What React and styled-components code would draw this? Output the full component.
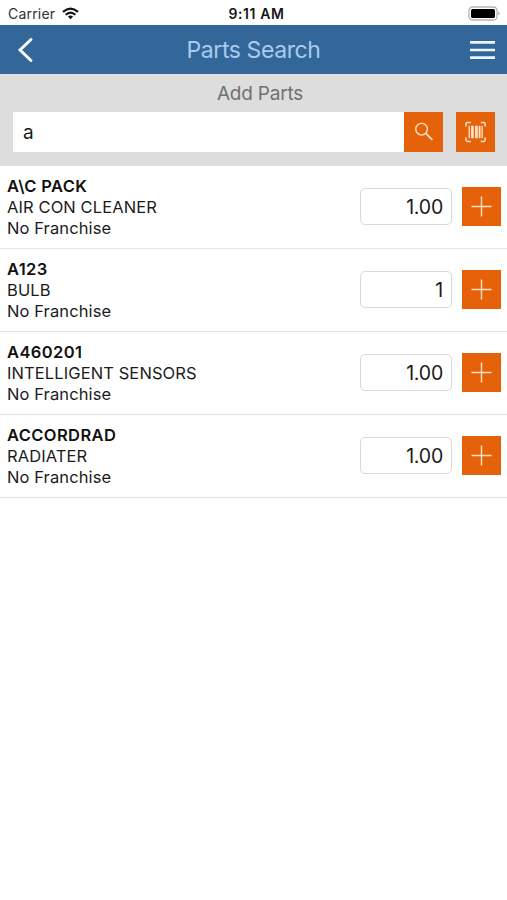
import React from "react";
import styled, { createGlobalStyle } from "styled-components";

const GlobalStyle = createGlobalStyle`
  * { box-sizing: border-box; }
  body { margin: 0; background: #fff; }
  button, input { font: inherit; border: 0; padding: 0; margin: 0; border-radius: 0; outline: none; }
`;

const Screen = styled.div`
  width: 507px;
  height: 900px;
  background: #fff;
  color: #1b1b1b;
  font-family: Inter, "Liberation Sans", sans-serif;
  overflow: hidden;
`;

const StatusBar = styled.div`
  display: grid;
  grid-template-columns: 1fr auto 1fr;
  align-items: center;
  height: 25px;
  padding: 2px 7px 0 8px;
  font-size: 14px;
  line-height: 22px;
`;

const Carrier = styled.span`
  display: flex;
  align-items: center;
  gap: 7px;
  color: #303030;
  letter-spacing: 0.2px;
`;

const Clock = styled.span`
  padding-left: 5px;
  font-size: 14px;
  font-weight: 600;
  letter-spacing: 0.6px;
  color: #161616;
`;

const BatterySlot = styled.span`
  display: flex;
  justify-content: flex-end;
`;

const NavBar = styled.header`
  display: grid;
  grid-template-columns: 1fr auto 1fr;
  align-items: center;
  height: 49px;
  padding: 0 12px 0 17px;
  background: #336699;
`;

const NavButton = styled.button`
  display: flex;
  justify-self: ${(p) => p.$side};
  background: none;
  color: #fff;
`;

const Title = styled.h1`
  margin: 0 5px 0 0;
  font-size: 23px;
  font-weight: 400;
  line-height: 30px;
  letter-spacing: -0.4px;
  color: #a9cbee;
`;

const SearchPanel = styled.section`
  height: 92px;
  padding: 6px 12px 0 13px;
  background: #dddddd;
`;

const PanelTitle = styled.h2`
  margin: 0 0 4px;
  padding-left: 12px;
  font-size: 19px;
  font-weight: 400;
  line-height: 28px;
  letter-spacing: -0.2px;
  text-align: center;
  color: #707070;
`;

const SearchRow = styled.div`
  display: flex;
`;

const SearchInput = styled.input`
  flex: 1;
  min-width: 0;
  height: 40px;
  && { padding: 0 10px; }
  font-size: 19px;
  color: #1b1b1b;
  background: #fff;
`;

const ActionButton = styled.button`
  display: flex;
  flex: none;
  align-items: center;
  justify-content: center;
  width: 39px;
  height: ${(p) => p.$height || 39}px;
  && { margin-left: ${(p) => p.$gap || 0}px; }
  color: #ffe3c4;
  background: #e6620a;
`;

const PartRow = styled.li`
  display: flex;
  align-items: flex-start;
  height: 83px;
  padding: 10px 6px 0 7px;
  border-bottom: 1px solid #e2e2e2;
`;

const PartList = styled.ul`
  margin: 0;
  padding: 0;
  list-style: none;
`;

const PartInfo = styled.div`
  flex: 1;
  font-size: 16.5px;
  line-height: 21px;
`;

const PartCode = styled.div`
  font-weight: 600;
  color: #111;
  letter-spacing: 0.4px;
`;

const PartLine = styled.div`
  letter-spacing: 0.1px;
`;

const Controls = styled.div`
  display: flex;
  align-items: center;
  height: 61px;
`;

const Quantity = styled.input`
  width: 92px;
  height: 37px;
  && {
    padding: 0 8px;
    border: 1px solid #d9d9d9;
    border-radius: 5px;
  }
  font-size: 19.5px;
  letter-spacing: -0.2px;
  text-align: right;
  color: #1b1b1b;
  background: #fff;
`;

const WifiIcon = () => (
  <svg width="17" height="13" viewBox="0 0 17 13" fill="none" stroke="#111" strokeWidth="2.1">
    <path d="M1 4.9Q8.5-1.7 16 4.9" />
    <path d="M3.6 7.8Q8.5 3.4 13.4 7.8" />
    <path d="M5.9 9.5Q8.5 7.3 11.1 9.5L8.5 12.2Z" fill="#111" stroke="none" />
  </svg>
);

const BatteryIcon = () => (
  <svg width="32" height="15" viewBox="0 0 32 15">
    <rect x="1" y="1" width="28" height="13" rx="3.6" fill="#fff" stroke="#b5b5b5" strokeWidth="1.3" />
    <rect x="3" y="3" width="24" height="9" rx="1.6" fill="#000" />
    <path d="M30.5 5.5Q32.5 7.5 30.5 9.5Z" fill="#888" />
  </svg>
);

const BackIcon = () => (
  <svg width="17" height="26" viewBox="0 0 17 26" fill="none" stroke="currentColor" strokeWidth="2.9">
    <path d="M14 2.5L3 13L14 23.5" strokeLinecap="round" />
  </svg>
);

const MenuIcon = () => (
  <svg width="25" height="20" viewBox="0 0 25 20" stroke="#edf6ff" strokeWidth="2.6">
    <path d="M0 2.4H25M0 10H25M0 17.6H25" />
  </svg>
);

const SearchIcon = () => (
  <svg width="20" height="20" viewBox="0 0 20 20" fill="none" stroke="currentColor" strokeWidth="1.4">
    <circle cx="7.6" cy="7.2" r="5.8" />
    <path d="M11.8 11.4L18.4 17.8" strokeWidth="1.7" />
  </svg>
);

const ScanIcon = () => (
  <svg width="22" height="22" viewBox="0 0 22 22" fill="none" stroke="currentColor">
    <path d="M1 5.5V3Q1 1.4 2.6 1.4H5.8M15.8 1.4H18.6Q20.2 1.4 20.2 3V5.5M20.2 16.5V19Q20.2 20.4 18.6 20.4H15.8M5.8 20.4H2.6Q1 20.4 1 19V16.5" strokeWidth="1.5" />
    <path d="M4.2 4.8V17.2M17.2 4.8V17.2" strokeWidth="1.3" />
    <path d="M7.4 4.8V17.2M11.4 4.8V17.2" strokeWidth="2.7" />
    <path d="M14.6 4.8V17.2" strokeWidth="1.9" />
  </svg>
);

const PlusIcon = () => (
  <svg width="21" height="21" viewBox="0 0 21 21" stroke="currentColor" strokeWidth="1.4">
    <path d="M.5 10.5H20.5M10.5 .5V20.5" />
  </svg>
);

const parts = [
  { code: "A\\C PACK", name: "AIR CON CLEANER", qty: "1.00" },
  { code: "A123", name: "BULB", qty: "1" },
  { code: "A460201", name: "INTELLIGENT SENSORS", qty: "1.00" },
  { code: "ACCORDRAD", name: "RADIATER", qty: "1.00" },
];

export default function App() {
  return (
    <Screen>
      <GlobalStyle />
      <StatusBar>
        <Carrier>Carrier <WifiIcon /></Carrier>
        <Clock>9:11 AM</Clock>
        <BatterySlot><BatteryIcon /></BatterySlot>
      </StatusBar>
      <NavBar>
        <NavButton $side="start" aria-label="Back"><BackIcon /></NavButton>
        <Title>Parts Search</Title>
        <NavButton $side="end" aria-label="Menu"><MenuIcon /></NavButton>
      </NavBar>
      <SearchPanel>
        <PanelTitle>Add Parts</PanelTitle>
        <SearchRow>
          <SearchInput defaultValue="a" aria-label="Part" />
          <ActionButton $height={40} aria-label="Search"><SearchIcon /></ActionButton>
          <ActionButton $height={40} $gap={13} aria-label="Scan barcode"><ScanIcon /></ActionButton>
        </SearchRow>
      </SearchPanel>
      <PartList>
        {parts.map((part) => (
          <PartRow key={part.code}>
            <PartInfo>
              <PartCode>{part.code}</PartCode>
              <PartLine>{part.name}</PartLine>
              <PartLine>No Franchise</PartLine>
            </PartInfo>
            <Controls>
              <Quantity defaultValue={part.qty} aria-label="Quantity" />
              <ActionButton $gap={10} aria-label="Add part"><PlusIcon /></ActionButton>
            </Controls>
          </PartRow>
        ))}
      </PartList>
    </Screen>
  );
}
